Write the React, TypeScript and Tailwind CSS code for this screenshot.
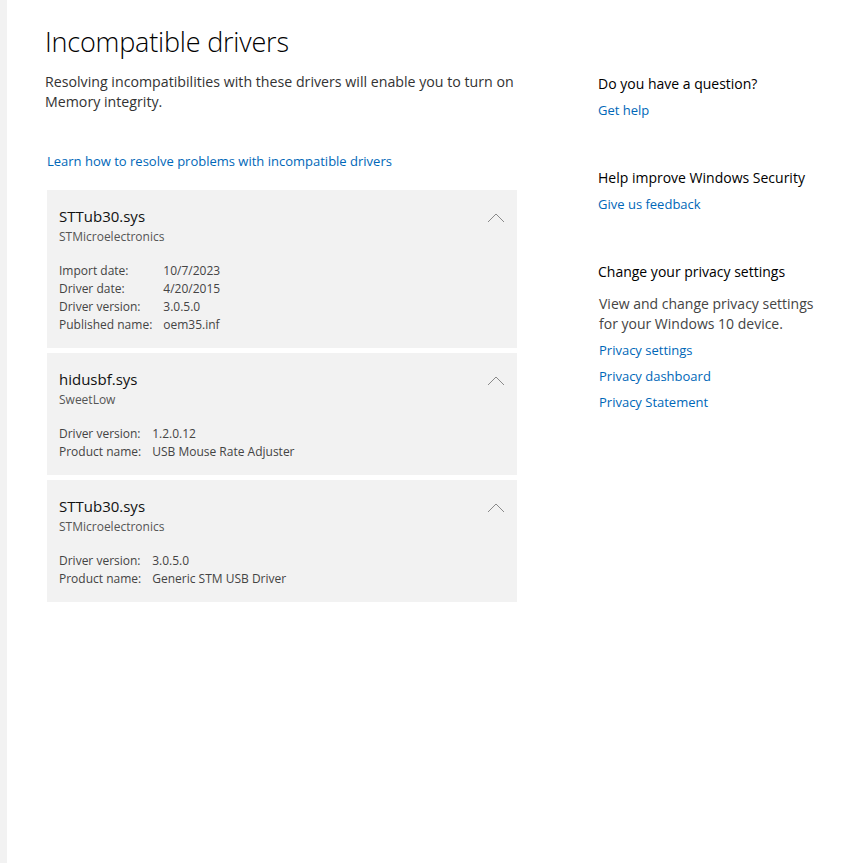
const drivers = [
  {
    name: "STTub30.sys",
    vendor: "STMicroelectronics",
    rows: [
      ["Import date:", "10/7/2023"],
      ["Driver date:", "4/20/2015"],
      ["Driver version:", "3.0.5.0"],
      ["Published name:", "oem35.inf"],
    ],
  },
  {
    name: "hidusbf.sys",
    vendor: "SweetLow",
    rows: [
      ["Driver version:", "1.2.0.12"],
      ["Product name:", "USB Mouse Rate Adjuster"],
    ],
  },
  {
    name: "STTub30.sys",
    vendor: "STMicroelectronics",
    rows: [
      ["Driver version:", "3.0.5.0"],
      ["Product name:", "Generic STM USB Driver"],
    ],
  },
];

const Chevron = () => (
  <svg width="18" height="10" viewBox="0 0 18 10" className="mt-[8px]">
    <path d="M1 9 L9 1 L17 9" fill="none" stroke="#8a8a8a" strokeWidth="1" />
  </svg>
);

const App = () => {
  return (
    <div className="flex min-h-[863px] bg-white font-['Open_Sans',sans-serif] text-black">
      <div className="w-[7px] bg-[#f2f2f2]" />
      <div className="flex pl-[38px]">
        {/* main column */}
        <div className="w-[472px]">
          <h1 className="mt-[24px] text-[27px] font-light leading-[36px] tracking-[-0.2px]">
            Incompatible drivers
          </h1>
          <p className="mt-[12px] text-[14.2px] leading-[20px] text-[#333]">
            Resolving incompatibilities with these drivers will enable you to turn on Memory integrity.
          </p>
          <a className="mt-[39px] ml-[2px] block text-[13px] leading-[20px] text-[#0067b8]">
            Learn how to resolve problems with incompatible drivers
          </a>
          <div className="mt-[19px] ml-[2px] flex w-[470px] flex-col gap-[5px]">
            {drivers.map((d, i) => (
              <div key={i} className="bg-[#f2f2f2] pl-[12px] pr-[12px] pt-[15px] pb-[14px]">
                <div className="flex items-start justify-between">
                  <div>
                    <div className="text-[15px] leading-[22px] text-[#111]">{d.name}</div>
                    <div className="mt-[1px] text-[12px] leading-[18px] text-[#555]">{d.vendor}</div>
                  </div>
                  <Chevron />
                </div>
                <table className="mt-[16px] text-[12px] leading-[18px] text-[#444]">
                  <tbody>
                    {d.rows.map(([k, v]) => (
                      <tr key={k}>
                        <td className="pr-[11px] align-top">{k}</td>
                        <td className="align-top">{v}</td>
                      </tr>
                    ))}
                  </tbody>
                </table>
              </div>
            ))}
          </div>
        </div>
        {/* side column */}
        <div className="ml-[81px] mt-[73px] w-[240px]">
          <div className="text-[14px] leading-[22px]">Do you have a question?</div>
          <a className="mt-[5px] block text-[13px] leading-[20px] text-[#0067b8]">Get help</a>
          <div className="mt-[47px] text-[14px] leading-[22px]">Help improve Windows Security</div>
          <a className="mt-[5px] block text-[13px] leading-[20px] text-[#0067b8]">Give us feedback</a>
          <div className="mt-[47px] text-[14px] leading-[22px]">Change your privacy settings</div>
          <p className="mt-[11px] w-[225px] pl-[1px] text-[14px] leading-[20px] text-[#444]">
            View and change privacy settings for your Windows 10 device.
          </p>
          <a className="mt-[6px] ml-[1px] block text-[13px] leading-[20px] text-[#0067b8]">Privacy settings</a>
          <a className="mt-[6px] ml-[1px] block text-[13px] leading-[20px] text-[#0067b8]">Privacy dashboard</a>
          <a className="mt-[6px] ml-[1px] block text-[13px] leading-[20px] text-[#0067b8]">Privacy Statement</a>
        </div>
      </div>
    </div>
  );
};

export default App;
